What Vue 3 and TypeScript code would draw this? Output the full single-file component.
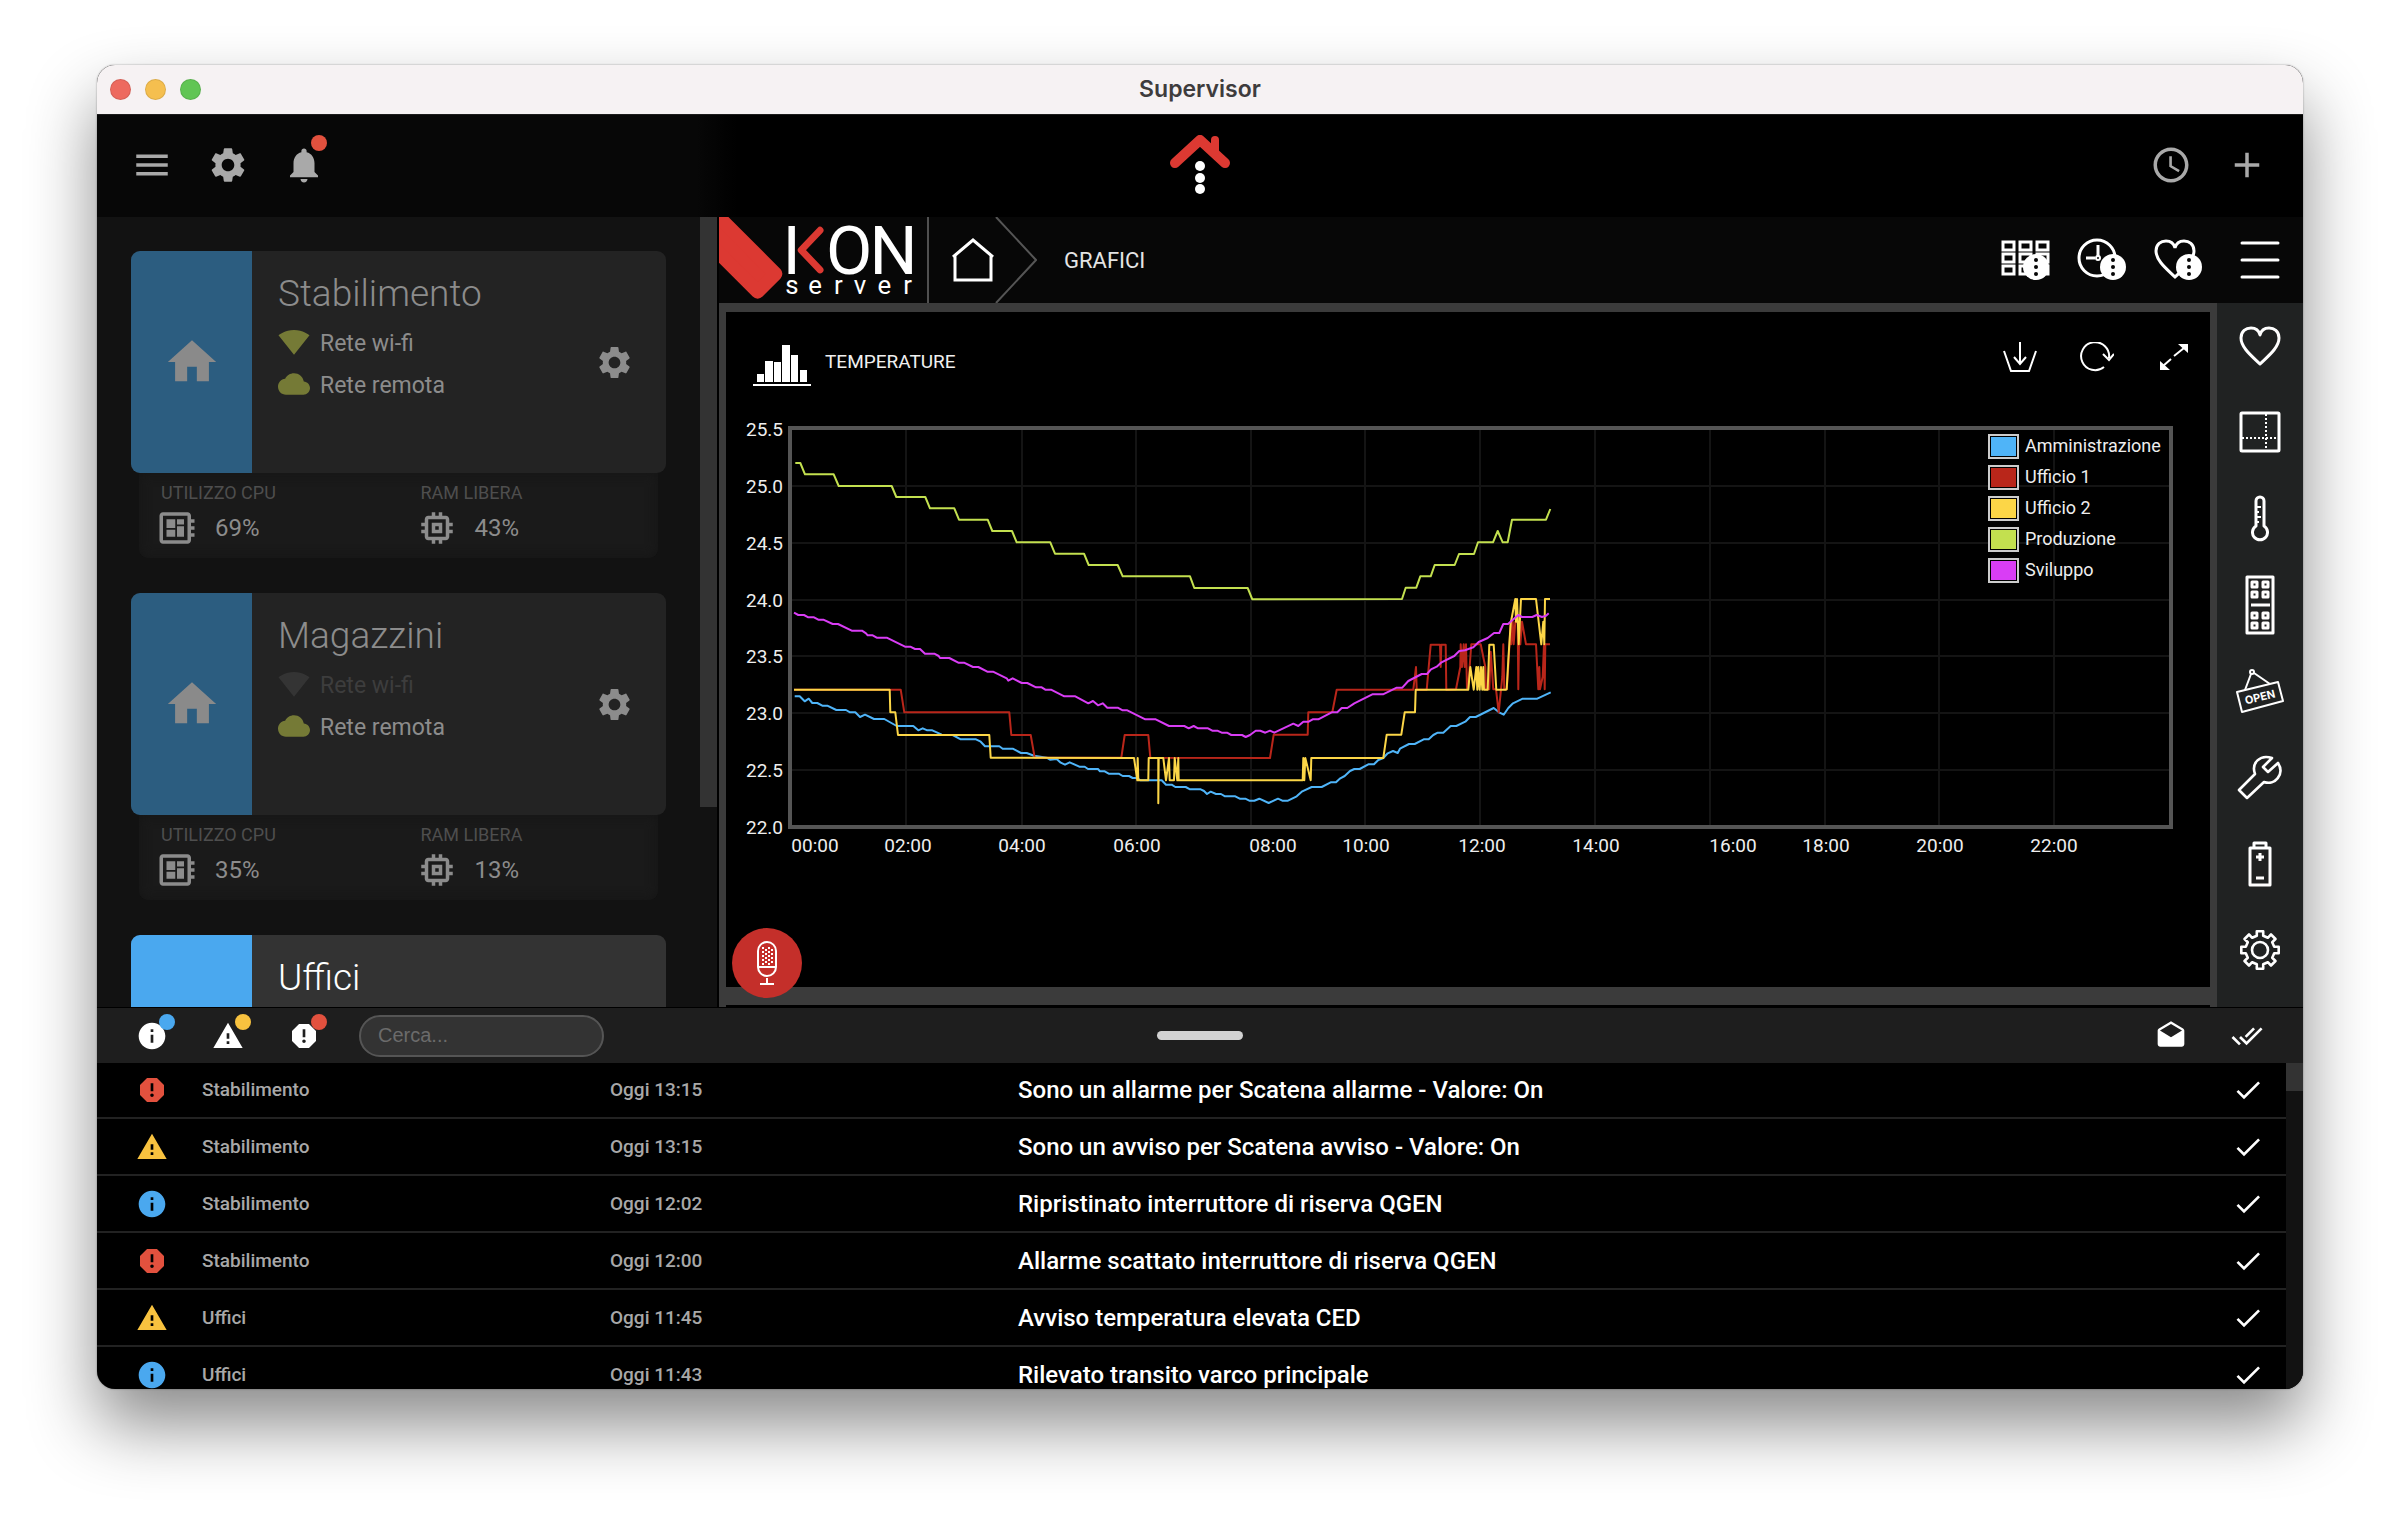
<script setup lang="ts">
import { computed, ref } from 'vue'

type Level = 'alarm' | 'warning' | 'info'
type Point = [number, number]

const icons = {
  menu: 'M3 18h18v-2H3v2zm0-5h18v-2H3v2zm0-7v2h18V6H3z',
  settings:
    'M19.14 12.94c.04-.3.06-.61.06-.94 0-.32-.02-.64-.07-.94l2.03-1.58c.18-.14.23-.41.12-.61l-1.92-3.32c-.12-.22-.37-.29-.59-.22l-2.39.96c-.5-.38-1.03-.7-1.62-.94l-.36-2.54c-.04-.24-.24-.41-.48-.41h-3.84c-.24 0-.43.17-.47.41l-.36 2.54c-.59.24-1.13.57-1.62.94l-2.39-.96c-.22-.08-.47 0-.59.22L2.74 8.87c-.12.21-.08.47.12.61l2.03 1.58c-.05.3-.09.63-.09.94s.02.64.07.94l-2.03 1.58c-.18.14-.23.41-.12.61l1.92 3.32c.12.22.37.29.59.22l2.39-.96c.5.38 1.03.7 1.62.94l.36 2.54c.05.24.24.41.48.41h3.84c.24 0 .44-.17.47-.41l.36-2.54c.59-.24 1.13-.56 1.62-.94l2.39.96c.22.08.47 0 .59-.22l1.92-3.32c.12-.22.07-.47-.12-.61l-2.01-1.58zM12 15.6c-1.98 0-3.6-1.62-3.6-3.6s1.62-3.6 3.6-3.6 3.6 1.62 3.6 3.6-1.62 3.6-3.6 3.6z',
  bell: 'M12 22c1.1 0 2-.9 2-2h-4c0 1.1.89 2 2 2zm6-6v-5c0-3.07-1.64-5.64-4.5-6.32V4c0-.83-.67-1.5-1.5-1.5s-1.5.67-1.5 1.5v.68C7.63 5.36 6 7.92 6 11v5l-2 2v1h16v-1l-2-2z',
  clock:
    'M11.99 2C6.47 2 2 6.48 2 12s4.47 10 9.99 10C17.52 22 22 17.52 22 12S17.52 2 11.99 2zM12 20c-4.42 0-8-3.58-8-8s3.58-8 8-8 8 3.58 8 8-3.58 8-8 8zm.5-13H11v6l5.25 3.15.75-1.23-4.5-2.67z',
  add: 'M19 13h-6v6h-2v-6H5v-2h6V5h2v6h6v2z',
  home: 'M10 20v-6h4v6h5v-8h3L12 3 2 12h3v8z',
  wifi: 'M12.01 21.49L23.64 7c-.45-.34-4.93-4-11.64-4C5.28 3 .81 6.66.36 7l11.63 14.49.01.01.01-.01z',
  cloud:
    'M19.35 10.04C18.67 6.59 15.64 4 12 4 9.11 4 6.6 5.64 5.35 8.04 2.34 8.36 0 10.91 0 14c0 3.31 2.69 6 6 6h13c2.76 0 5-2.24 5-5 0-2.64-2.05-4.78-4.65-4.96z',
  board:
    'M22 9V7h-2V5c0-1.1-.9-2-2-2H4c-1.1 0-2 .9-2 2v14c0 1.1.9 2 2 2h14c1.1 0 2-.9 2-2v-2h2v-2h-2v-2h2v-2h-2V9h2zm-4 10H4V5h14v14zM6 13h5v4H6zm6-6h4v3h-4zM6 7h5v5H6zm6 4h4v6h-4z',
  memory:
    'M15 9H9v6h6V9zm-2 4h-2v-2h2v2zm8-2V9h-2V7c0-1.1-.9-2-2-2h-2V3h-2v2h-2V3H9v2H7c-1.1 0-2 .9-2 2v2H3v2h2v2H3v2h2v2c0 1.1.9 2 2 2h2v2h2v-2h2v2h2v-2h2c1.1 0 2-.9 2-2v-2h2v-2h-2v-2h2zm-4 6H7V7h10v10z',
  drafts:
    'M21.99 8c0-.72-.37-1.35-.94-1.7L12 1 2.95 6.3C2.38 6.65 2 7.28 2 8v10c0 1.1.9 2 2 2h16c1.1 0 2-.9 2-2l-.01-10zM12 13L3.74 7.84 12 3l8.26 4.84L12 13z',
  doneAll:
    'M18 7l-1.41-1.41-6.34 6.34 1.41 1.41L18 7zm4.24-1.41L11.66 16.17 7.48 12l-1.41 1.41L11.66 19l12-12-1.42-1.41zM.41 13.41L6 19l1.41-1.41L1.83 12 .41 13.41z',
  done: 'M9 16.2L4.8 12l-1.4 1.4L9 19 21 7l-1.4-1.4L9 16.2z',
}

const levelIcons: Record<Level, string> = {
  info: 'M12 2C6.48 2 2 6.48 2 12s4.48 10 10 10 10-4.48 10-10S17.52 2 12 2zm1 15h-2v-6h2v6zm0-8h-2V7h2v2z',
  warning: 'M1 21h22L12 2 1 21zm12-3h-2v-2h2v2zm0-4h-2v-4h2v4z',
  alarm:
    'M15.73 3H8.27L3 8.27v7.46L8.27 21h7.46L21 15.73V8.27L15.73 3zM12 17.3c-.72 0-1.3-.58-1.3-1.3 0-.72.58-1.3 1.3-1.3.72 0 1.3.58 1.3 1.3 0 .72-.58 1.3-1.3 1.3zm1-4.3h-2V7h2v6z',
}

const filters: { level: Level; label: string }[] = [
  { level: 'info', label: 'Informazioni' },
  { level: 'warning', label: 'Avvisi' },
  { level: 'alarm', label: 'Allarmi' },
]

interface Plant {
  name: string
  active?: boolean
  status?: { wifi: boolean; remote: boolean; cpu: string; ram: string }
}

const plants: Plant[] = [
  { name: 'Stabilimento', status: { wifi: true, remote: true, cpu: '69%', ram: '43%' } },
  { name: 'Magazzini', status: { wifi: false, remote: true, cpu: '35%', ram: '13%' } },
  { name: 'Uffici', active: true },
]

const query = ref('')
const events: { level: Level; plant: string; time: string; message: string }[] = [
  { level: 'alarm', plant: 'Stabilimento', time: 'Oggi 13:15', message: 'Sono un allarme per Scatena allarme - Valore: On' },
  { level: 'warning', plant: 'Stabilimento', time: 'Oggi 13:15', message: 'Sono un avviso per Scatena avviso - Valore: On' },
  { level: 'info', plant: 'Stabilimento', time: 'Oggi 12:02', message: 'Ripristinato interruttore di riserva QGEN' },
  { level: 'alarm', plant: 'Stabilimento', time: 'Oggi 12:00', message: 'Allarme scattato interruttore di riserva QGEN' },
  { level: 'warning', plant: 'Uffici', time: 'Oggi 11:45', message: 'Avviso temperatura elevata CED' },
  { level: 'info', plant: 'Uffici', time: 'Oggi 11:43', message: 'Rilevato transito varco principale' },
]
const shownEvents = computed(() =>
  events.filter((e) => `${e.plant} ${e.message}`.toLowerCase().includes(query.value.toLowerCase())),
)

/* Outline of a cog with eight teeth, centred on (cx, cy). */
function cogPath(cx: number, cy: number, outer: number, inner: number): string {
  const pts: string[] = []
  for (let i = 0; i < 8; i++) {
    const a = (i * Math.PI) / 4
    for (const [r, d] of [[inner, -0.22], [outer, -0.17], [outer, 0.17], [inner, 0.22]]) {
      pts.push(`${(cx + r * Math.sin(a + d)).toFixed(1)} ${(cy - r * Math.cos(a + d)).toFixed(1)}`)
    }
  }
  return `M${pts.join('L')}Z`
}

const heart = '<path d="M21 38C14 31 2 22 2 12C2 5 7 2 12 2C17 2 20 5 21 9C22 5 25 2 30 2C35 2 40 5 40 12C40 22 28 31 21 38Z"/>'
const keys = [[7, 7], [18, 7], [7, 17], [18, 17], [7, 38], [18, 38], [7, 48], [18, 48]]
  .map(([x, y]) => `<rect x="${x}" y="${y}" width="5" height="5"/>`)
  .join('')

const sections = [
  { label: 'Preferiti', w: 42, h: 40, body: heart },
  {
    label: 'Planimetria', w: 42, h: 42,
    body: '<rect x="2" y="2" width="38" height="38" rx="1"/><path stroke-width="2" stroke-dasharray="2 2" d="M27 3V39M3 27H39"/>',
  },
  {
    label: 'Clima', w: 18, h: 48,
    body: '<path d="M5 31V6a4 4 0 0 1 8 0v25a7.5 7.5 0 1 1-8 0z"/><path stroke-width="2" d="M5 12h5M5 17h3M5 22h5M5 27h3"/>',
  },
  { label: 'Pulsanti', w: 30, h: 60, body: `<rect x="2" y="2" width="26" height="56"/>${keys}<path d="M6 30H25"/>` },
  {
    label: 'Apertura', w: 48, h: 46,
    body: '<g stroke-width="2"><path d="M1 24L42 14L47 33L6 44Z"/><circle cx="16" cy="4" r="2"/><path d="M9 22L15 6M18 5L34 16"/></g><text x="24" y="33" transform="rotate(-14 24 29)" text-anchor="middle" font-family="Inter, sans-serif" font-size="11" font-weight="700" fill="#fff" stroke="none">OPEN</text>',
  },
  {
    label: 'Manutenzione', w: 46, h: 46,
    body: '<path stroke-width="2.6" d="M2 36L18 20C14 9 23 0 35 4L26 13L31 18L41 9C48 20 38 32 27 28L10 44Z"/>',
  },
  {
    label: 'Energia', w: 24, h: 46,
    body: '<path d="M2 7H22V44H2ZM6 7V2H18V7M12 12V20M8 16H16M8 37H16"/>',
  },
  { label: 'Impostazioni', w: 42, h: 42, body: `<path stroke-width="2.6" d="${cogPath(21, 21, 19, 14.5)}"/><circle stroke-width="2.6" cx="21" cy="21" r="8"/>` },
]

/* Chart geometry: one degree is 341 trace units, three trace units are one chart unit. */
const yTicks = [25.5, 25, 24.5, 24, 23.5, 23, 22.5, 22].map((v, i) => ({
  label: v.toFixed(1),
  y: 29 + i * 57 - (i > 3 ? 1 : 0),
}))
const xTicks = [
  { label: '00:00', x: 89, grid: 0 },
  { label: '02:00', x: 182, grid: 180 },
  { label: '04:00', x: 296, grid: 296 },
  { label: '06:00', x: 411, grid: 410 },
  { label: '08:00', x: 547, grid: 525 },
  { label: '10:00', x: 640, grid: 639 },
  { label: '12:00', x: 756, grid: 754 },
  { label: '14:00', x: 870, grid: 869 },
  { label: '16:00', x: 1007, grid: 984 },
  { label: '18:00', x: 1100, grid: 1099 },
  { label: '20:00', x: 1214, grid: 1213 },
  { label: '22:00', x: 1328, grid: 1328 },
]

function block(dx: number, dy: number, flat: number[]): Point[] {
  const out: Point[] = []
  for (let i = 0; i < flat.length; i += 2) out.push([flat[i] + dx, flat[i + 1] + dy])
  return out
}
const night = (...flat: number[]) => block(0, 0, flat)
const morning = (...flat: number[]) => block(1170, 480, flat)
const noon = (...flat: number[]) => block(1830, 240, flat)

const series: { name: string; color: string; points: Point[] }[] = [
  {
    name: 'Amministrazione', color: '#4fb4f8',
    points: [
      ...night(194, 889, 209, 889, 224, 904, 236, 896, 247, 909, 262, 909, 277, 917, 292, 917, 319, 930, 348, 930, 360, 937, 376, 937, 390, 951, 405, 944, 432, 957, 463, 957, 500, 978, 550, 978, 565, 991, 578, 985, 592, 991, 607, 991, 635, 1004, 668, 1005, 692, 1018, 738, 1018, 752, 1025, 765, 1039, 808, 1039, 818, 1046, 848, 1046, 873, 1059, 890, 1059, 912, 1067, 950, 1073, 960, 1079, 980, 1077, 992, 1088, 1005, 1094, 1019, 1087, 1048, 1100, 1064, 1100, 1074, 1107, 1104, 1107, 1110, 1114, 1124, 1114, 1136, 1121, 1166, 1121),
      ...morning(8, 648, 27, 648, 38, 654, 50, 654, 62, 661, 125, 661, 138, 674, 155, 674, 166, 681, 197, 681, 210, 688, 242, 688, 252, 693, 261, 702, 272, 695, 288, 702, 303, 702, 315, 709, 346, 709, 359, 716, 376, 716, 388, 722, 403, 722, 418, 716, 446, 729, 474, 716, 487, 722, 504, 722, 530, 709, 547, 694, 575, 681, 605, 681, 632, 667, 648, 667, 661, 655, 674, 648, 690, 633, 703, 627, 719, 627, 745, 613, 762, 613, 775, 600, 790, 594, 803, 580, 819, 573, 833, 579, 840, 566, 867, 552, 884, 552, 911, 538, 926, 538, 940, 525, 953, 518, 970, 518, 992, 498, 1009, 498, 1036, 485, 1050, 471, 1067, 471, 1121, 444, 1137, 457, 1151, 464, 1165, 444, 1179, 430, 1208, 416, 1252, 416, 1292, 397),
    ],
  },
  {
    name: 'Ufficio 1', color: '#b9261a',
    points: [
      ...night(192, 869, 512, 869, 523, 937, 838, 937, 844, 1005, 902, 1005, 914, 1073, 1174, 1073, 1184, 1005, 1255, 1005, 1261, 1073),
      ...morning(450, 594, 461, 524, 563, 524, 565, 457, 637, 457, 650, 389, 880, 389, 888, 321, 890, 389, 920, 389, 932, 254, 960, 254, 962, 321, 964, 254, 977, 254, 979, 389),
      ...noon(348, 628, 361, 561, 362, 493, 366, 561, 371, 493, 374, 561, 378, 493, 381, 628, 384, 628, 394, 493, 422, 493, 436, 561, 438, 628, 448, 628, 452, 515, 460, 628, 468, 628, 476, 697, 487, 590, 490, 493, 493, 628, 500, 628, 505, 560, 512, 425, 514, 493, 518, 425, 521, 493, 526, 425, 533, 425, 535, 628, 538, 425, 541, 493, 546, 425, 558, 493, 588, 493, 595, 628, 598, 561, 600, 628, 608, 590, 612, 493, 614, 628, 616, 493, 630, 493),
    ],
  },
  {
    name: 'Ufficio 2', color: '#fcd647',
    points: [
      ...night(192, 869, 479, 869, 481, 937, 496, 937, 504, 1005, 778, 1005, 782, 1073),
      ...morning(42, 594, 52, 661, 53, 594, 55, 661, 85, 661, 86, 594, 115, 594, 115, 730, 116, 594, 130, 594, 138, 661, 147, 594, 149, 661, 162, 661, 164, 594, 172, 661, 175, 594, 176, 661, 548, 661, 550, 594, 553, 661, 556, 594, 572, 661, 574, 594, 790, 594, 800, 524, 844, 524, 854, 457, 885, 457, 887, 389, 1045, 389, 1051, 321, 1061, 389, 1069, 321, 1072, 389, 1075, 321, 1079, 389, 1083, 321, 1087, 389, 1090, 321, 1092, 389, 1103, 389, 1108, 254, 1121, 254, 1129, 389, 1158, 389),
      ...noon(500, 628, 505, 540, 512, 430, 526, 357, 528, 425, 531, 357, 536, 493, 543, 357, 588, 357, 604, 493, 610, 425, 613, 493, 615, 357, 630, 357),
    ],
  },
  {
    name: 'Produzione', color: '#c3e04f',
    points: [
      ...night(196, 189, 211, 189, 225, 223, 311, 223, 326, 258, 485, 258, 499, 291, 586, 291, 600, 325, 673, 325, 687, 359, 773, 359, 787, 393, 846, 393, 860, 427, 961, 427, 975, 461, 1062, 461, 1076, 495, 1163, 495, 1178, 529),
      ...morning(210, 49, 223, 84, 383, 84, 397, 118),
      ...noon(186, 357, 197, 323, 229, 323, 241, 289, 272, 289, 284, 255, 344, 255, 357, 222, 402, 222, 414, 187, 459, 187, 473, 153, 488, 187, 503, 187, 516, 119, 618, 119, 631, 87),
    ],
  },
  {
    name: 'Sviluppo', color: '#d93df5',
    points: [
      ...night(192, 638, 205, 645, 222, 645, 235, 652, 252, 652, 265, 659, 280, 659, 308, 672, 324, 672, 365, 692, 396, 692, 408, 700, 413, 706, 428, 706, 440, 713, 470, 713, 525, 740, 541, 740, 555, 747, 570, 747, 585, 761, 613, 761, 626, 768, 630, 774, 658, 774, 685, 788, 702, 788, 729, 801, 745, 801, 772, 815, 789, 815, 830, 835, 835, 842, 848, 835, 875, 849, 892, 849, 918, 862, 935, 862, 946, 869, 963, 869, 1003, 889, 1036, 889, 1075, 910, 1089, 903, 1104, 916, 1118, 910, 1132, 923, 1163, 923),
      ...morning(8, 451, 22, 451, 76, 478, 107, 478, 147, 498, 193, 498, 206, 505, 221, 498, 234, 505, 264, 505, 277, 512, 292, 512, 305, 518, 321, 518, 334, 525, 366, 525, 377, 531, 390, 525, 407, 512, 421, 512, 436, 518, 450, 512, 463, 518, 520, 491, 535, 498, 550, 485, 566, 485, 578, 478, 595, 478, 635, 457, 652, 457, 665, 444, 682, 444, 703, 430, 757, 403, 789, 403, 830, 383, 847, 383, 865, 363, 905, 342, 921, 342, 933, 328, 950, 320, 963, 308, 1003, 288, 1018, 273, 1035, 271, 1060, 262, 1076, 246, 1103, 234, 1122, 219, 1138, 219),
      ...noon(490, 432, 504, 432, 535, 405, 546, 411, 577, 411, 590, 405, 606, 411, 618, 407, 626, 400),
    ],
  },
]
const polyline = (pts: Point[]) => pts.map(([x, y]) => `${(x / 3 + 4).toFixed(1)},${(y / 3).toFixed(1)}`).join(' ')

const micHoles: Point[] = []
for (let r = 0; r < 9; r++) for (let c = 0; c < 4; c++) if ((r + c) % 2 === 0) micHoles.push([5 + c * 3, 6 + r * 2])
</script>

<template>
  <div class="desktop">
    <div class="window">
      <header class="titlebar">
        <div class="lights">
          <button class="light close" aria-label="Chiudi"></button>
          <button class="light minimize" aria-label="Riduci"></button>
          <button class="light zoom" aria-label="Ingrandisci"></button>
        </div>
        <h1>Supervisor</h1>
      </header>

      <div class="appbar">
        <div class="bar-group">
          <button class="tool" aria-label="Menu"><svg viewBox="0 0 24 24"><path :d="icons.menu" /></svg></button>
          <button class="tool" aria-label="Impostazioni"><svg viewBox="0 0 24 24"><path :d="icons.settings" /></svg></button>
          <button class="tool" aria-label="Notifiche">
            <svg viewBox="0 0 24 24"><path :d="icons.bell" /></svg>
            <span class="dot alarm high"></span>
          </button>
        </div>
        <svg class="brand" viewBox="0 0 62 60">
          <g fill="none" stroke="#dc3932" stroke-width="9" stroke-linecap="round" stroke-linejoin="round">
            <path d="M6 28L31 5L56 28" stroke-width="10" />
            <path d="M46 5V18" stroke-width="8" />
          </g>
          <g fill="#fff">
            <circle cx="31" cy="31" r="5" />
            <circle cx="31" cy="43" r="5" />
            <circle cx="31" cy="54" r="5" />
          </g>
        </svg>
        <div class="bar-group end">
          <button class="tool" aria-label="Cronologia"><svg viewBox="0 0 24 24"><path :d="icons.clock" /></svg></button>
          <button class="tool" aria-label="Aggiungi"><svg viewBox="0 0 24 24"><path :d="icons.add" /></svg></button>
        </div>
      </div>

      <div class="main">
        <aside class="sidebar">
          <div class="plants">
            <section v-for="p in plants" :key="p.name" class="plant" :class="{ active: p.active }">
              <div class="card">
                <div class="badge">
                  <svg v-if="!p.active" viewBox="0 0 24 24"><path :d="icons.home" /></svg>
                </div>
                <div class="details">
                  <h2>{{ p.name }}</h2>
                  <template v-if="p.status">
                    <p :class="{ off: !p.status.wifi }"><svg viewBox="0 0 24 24"><path :d="icons.wifi" /></svg>Rete wi-fi</p>
                    <p :class="{ off: !p.status.remote }"><svg viewBox="0 0 24 24"><path :d="icons.cloud" /></svg>Rete remota</p>
                  </template>
                </div>
                <button class="config" :aria-label="`Configura ${p.name}`">
                  <svg viewBox="0 0 24 24"><path :d="icons.settings" /></svg>
                </button>
              </div>
              <dl v-if="p.status" class="stats">
                <div>
                  <dt>UTILIZZO CPU</dt>
                  <dd><svg viewBox="0 0 24 24"><path :d="icons.board" /></svg>{{ p.status.cpu }}</dd>
                </div>
                <div>
                  <dt>RAM LIBERA</dt>
                  <dd><svg viewBox="0 0 24 24"><path :d="icons.memory" /></svg>{{ p.status.ram }}</dd>
                </div>
              </dl>
            </section>
          </div>
          <div class="scroll"><div class="thumb"></div></div>
        </aside>

        <div class="remote">
          <header class="remote-head">
            <svg class="ikon" viewBox="0 0 210 86" role="img" aria-label="IKON server">
              <path d="M39 75L57 57L-13 -13L-31 5Z" fill="#dc3932" stroke="#dc3932" stroke-width="14" stroke-linejoin="round" />
              <g fill="#fff" font-family="Roboto, sans-serif">
                <text x="64 108 152" y="57" font-size="68">ION</text>
                <text x="67 90 116 136 160 186" y="77" font-size="26">server</text>
              </g>
              <path d="M102 13L83 33L102 53" fill="none" stroke="#dc3932" stroke-width="7" stroke-linecap="round" stroke-linejoin="round" />
            </svg>
            <a class="crumb-home" href="#" aria-label="Home">
              <svg class="house" viewBox="0 0 44 44"><path d="M2 19L22 2L42 19M4 18V42H40V18" /></svg>
              <svg class="arrow" viewBox="0 0 42 86"><path d="M1 0L41 43L1 86" /></svg>
            </a>
            <span class="crumb">GRAFICI</span>
            <div class="head-tools">
              <button aria-label="Moduli">
                <svg viewBox="0 0 50 44">
                  <g stroke-width="3">
                    <template v-for="r in 3" :key="r">
                      <rect v-for="c in 3" :key="c" :x="c * 17 - 15" :y="r * 12 - 8" width="11" height="8" />
                    </template>
                  </g>
                  <circle cx="35" cy="29" r="13" class="fill" />
                  <g class="hole"><circle cx="35" cy="22" r="2" /><circle cx="35" cy="29" r="2" /><circle cx="35" cy="36" r="2" /></g>
                </svg>
              </button>
              <button aria-label="Programmi">
                <svg viewBox="0 0 50 44">
                  <circle cx="20" cy="20" r="18" /><path d="M21 7V18M9 20H18" /><circle cx="21" cy="20" r="2" stroke-width="2" />
                  <circle cx="36" cy="29" r="13" class="fill" />
                  <g class="hole"><circle cx="36" cy="22" r="2" /><circle cx="36" cy="29" r="2" /><circle cx="36" cy="36" r="2" /></g>
                </svg>
              </button>
              <button aria-label="Scenari preferiti">
                <svg viewBox="0 0 50 44">
                  <g transform="translate(1 1)" v-html="heart"></g>
                  <circle cx="36" cy="29" r="13" class="fill" />
                  <g class="hole"><circle cx="36" cy="22" r="2" /><circle cx="36" cy="29" r="2" /><circle cx="36" cy="36" r="2" /></g>
                </svg>
              </button>
              <button class="more" aria-label="Menu">
                <svg viewBox="0 0 50 44"><path d="M7 5H43M7 22H43M7 39H43" stroke-linecap="round" /></svg>
              </button>
            </div>
          </header>

          <div class="remote-body">
            <div class="frame">
              <div class="panel">
                <div class="panel-head">
                  <svg class="bars" viewBox="0 0 58 42">
                    <path d="M4 30h7v8h-7zM12 17h8v21h-8zM21 18h7v20h-7zM29 1h8v37h-8zM38 11h7v27h-7zM47 26h7v12h-7zM0 40h58v2h-58z" />
                  </svg>
                  <h2>TEMPERATURE</h2>
                  <div class="panel-tools">
                    <button aria-label="Scarica">
                      <svg viewBox="0 0 34 30"><path d="M1 9L8 29H26L33 9M17 0V21M11 15L17 22L23 15" /></svg>
                    </button>
                    <button aria-label="Aggiorna">
                      <svg viewBox="0 0 34 30"><path d="M24 25A14 14 0 1 1 29 16M23 12L29 18L34 12" /></svg>
                    </button>
                    <button aria-label="Espandi">
                      <svg viewBox="0 0 34 30">
                        <path d="M27 6L17 14M14 17L6 24" />
                        <path class="fill" d="M21 2H31V11ZM3 19V28H13Z" />
                      </svg>
                    </button>
                  </div>
                </div>
                <svg class="chart" viewBox="0 0 1484 460">
                  <g stroke="#141414" stroke-width="2">
                    <path v-for="t in xTicks.slice(1)" :key="t.label" :d="`M${t.grid} 30V426`" />
                    <path v-for="t in yTicks.slice(1, 7)" :key="t.label" :d="`M66 ${t.y}H1444`" />
                  </g>
                  <rect x="64" y="28" width="1381" height="399" fill="none" stroke="#555" stroke-width="4" />
                  <g fill="none" stroke-width="2" stroke-linejoin="round">
                    <polyline v-for="s in series" :key="s.name" :points="polyline(s.points)" :stroke="s.color" />
                  </g>
                  <g class="ticks">
                    <text v-for="t in yTicks" :key="t.label" x="57" :y="t.y + 7" text-anchor="end">{{ t.label }}</text>
                    <text v-for="t in xTicks" :key="t.label" :x="t.x" y="452" text-anchor="middle">{{ t.label }}</text>
                  </g>
                  <g v-for="(s, i) in series" :key="s.name" class="legend">
                    <rect x="1263" :y="35 + i * 31" width="29" height="23" fill="#000" stroke="#ccc" stroke-width="2" />
                    <rect x="1265" :y="37 + i * 31" width="25" height="19" :fill="s.color" />
                    <text x="1299" :y="52 + i * 31">{{ s.name }}</text>
                  </g>
                </svg>
              </div>
              <button class="mic" aria-label="Comando vocale">
                <svg viewBox="0 0 20 44">
                  <rect x="1" y="1" width="18" height="34" rx="9" />
                  <path d="M1 26H19M10 37V42M3 43H17" />
                  <rect v-for="([x, y], i) in micHoles" :key="i" class="fill" :x="x" :y="y" width="2" height="2" />
                </svg>
              </button>
            </div>
            <nav class="sections">
              <a v-for="s in sections" :key="s.label" href="#" :aria-label="s.label">
                <svg :width="s.w" :height="s.h" :viewBox="`0 0 ${s.w} ${s.h}`" v-html="s.body"></svg>
              </a>
            </nav>
          </div>
        </div>
      </div>

      <div class="log">
        <div class="log-bar">
          <button v-for="f in filters" :key="f.level" class="tool small" :aria-label="f.label">
            <svg viewBox="0 0 24 24"><path :d="levelIcons[f.level]" /></svg>
            <span class="dot" :class="f.level"></span>
          </button>
          <input v-model="query" type="text" placeholder="Cerca..." aria-label="Cerca" />
          <div class="grip"></div>
          <div class="bar-group end">
            <button class="tool small" aria-label="Segna come letti"><svg viewBox="0 0 24 24"><path :d="icons.drafts" /></svg></button>
            <button class="tool small" aria-label="Conferma tutti"><svg viewBox="0 0 24 24"><path :d="icons.doneAll" /></svg></button>
          </div>
        </div>
        <div class="log-body">
          <table>
            <tbody>
              <tr v-for="(e, i) in shownEvents" :key="i">
                <td class="c-icon" :class="e.level"><svg viewBox="0 0 24 24"><path :d="levelIcons[e.level]" /></svg></td>
                <td class="c-text">{{ e.plant }}</td>
                <td class="c-text">{{ e.time }}</td>
                <td class="c-msg">{{ e.message }}</td>
                <td class="c-ack">
                  <button class="tool small" aria-label="Conferma"><svg viewBox="0 0 24 24"><path :d="icons.done" /></svg></button>
                </td>
              </tr>
            </tbody>
          </table>
          <div class="scroll"><div class="thumb"></div></div>
        </div>
      </div>
    </div>
  </div>
</template>

<style>
body {
  margin: 0;
  background: #fff;
}
</style>

<style scoped>
* {
  box-sizing: border-box;
}
.desktop {
  height: 100vh;
  padding: 65px 97px 128px;
  overflow: hidden;
  font-family: Roboto, 'Liberation Sans', sans-serif;
  color: #fff;
}
.window {
  display: flex;
  flex-direction: column;
  height: 100%;
  overflow: hidden;
  border-radius: 18px;
  background: #000;
  box-shadow: 0 0 2px rgba(0, 0, 0, 0.4), 0 36px 68px rgba(0, 0, 0, 0.46);
}
button {
  padding: 0;
  border: 0;
  background: none;
  color: inherit;
  cursor: pointer;
}
h1, h2, p, dl, dd {
  margin: 0;
}
svg {
  display: block;
}

/* Title bar */
.titlebar {
  position: relative;
  display: flex;
  flex: none;
  align-items: center;
  justify-content: center;
  height: 49px;
  background: #f6f2f3;
}
.titlebar h1 {
  padding-bottom: 2px;
  font: 600 23px/30px Inter, sans-serif;
  color: #3e3c3d;
}
.lights {
  position: absolute;
  left: 13px;
  display: flex;
  gap: 14px;
}
.light {
  width: 21px;
  height: 21px;
  border: 1px solid rgba(0, 0, 0, 0.1);
  border-radius: 50%;
}
.close { background: #ed6a5f; }
.minimize { background: #f5bf4f; }
.zoom { background: #61c554; }

/* Application bar */
.appbar {
  display: flex;
  flex: none;
  align-items: center;
  justify-content: space-between;
  height: 103px;
  padding: 0 18px 2px 17px;
  border-top: 1px solid #1c1c1c;
  background: linear-gradient(90deg, #070707 600px, #000 640px);
}
.bar-group {
  display: flex;
  flex: 1;
}
.bar-group.end {
  justify-content: flex-end;
}
.tool {
  position: relative;
  display: flex;
  align-items: center;
  justify-content: center;
  width: 76px;
  height: 56px;
  color: #a9a9a9;
}
.tool svg {
  width: 42px;
  height: 42px;
  fill: currentColor;
}
.tool.small {
  color: #fff;
}
.tool.small svg {
  width: 32px;
  height: 32px;
}
.dot {
  position: absolute;
  top: 6px;
  left: 45px;
  width: 16px;
  height: 16px;
  border-radius: 50%;
}
.dot.high { top: -2px; }
.dot.info { background: #4aa8ef; }
.dot.warning { background: #f8c23f; }
.dot.alarm { background: #e2513e; }
.brand {
  width: 62px;
  height: 60px;
}

/* Plants */
.main {
  display: flex;
  flex: 1;
  min-height: 0;
}
.sidebar {
  display: flex;
  flex: none;
  width: 622px;
  overflow: hidden;
  border-right: 2px solid #000;
  background: #121212;
}
.plants {
  display: flex;
  flex: 1;
  flex-direction: column;
  gap: 35px;
  padding: 34px 34px 0;
}
.scroll {
  flex: none;
  width: 17px;
  background: #121212;
}
.thumb {
  background: #333;
}
.sidebar .thumb {
  height: 590px;
}
.plant {
  color: #8c8c8c;
}
.card {
  display: flex;
  height: 222px;
  overflow: hidden;
  border-radius: 9px;
  background: #232323;
}
.badge {
  display: flex;
  align-items: center;
  justify-content: center;
  width: 121px;
  background: #2c5d80;
}
.badge svg {
  width: 58px;
  height: 58px;
  fill: #8a8a8a;
}
.details {
  flex: 1;
  padding: 19px 0 0 26px;
}
.details h2 {
  margin-bottom: 5px;
  font-size: 37px;
  font-weight: 300;
  line-height: 48px;
}
.details p {
  display: flex;
  gap: 10px;
  align-items: center;
  font-size: 23px;
  line-height: 42px;
}
.details svg {
  width: 32px;
  height: 32px;
  margin-bottom: 5px;
  fill: #757a36;
}
.details .off {
  color: #3d3d3d;
}
.details .off svg {
  fill: #343434;
}
.config {
  width: 104px;
}
.config svg {
  width: 39px;
  height: 39px;
  margin: 0 auto;
  fill: currentColor;
}
.active {
  color: #fff;
}
.active .card {
  background: #333;
}
.active .badge {
  background: #4aa8ef;
}
.stats {
  display: flex;
  height: 85px;
  margin: 0 8px;
  padding-top: 9px;
  border-radius: 0 0 9px 9px;
  background: #1a1a1a;
  box-shadow: inset 0 0 12px #151515;
}
.stats > div {
  flex: 1;
  padding-left: 22px;
}
.stats dt {
  font-size: 18px;
  line-height: 21px;
  color: #4e4e4e;
}
.stats dd {
  display: flex;
  gap: 17px;
  align-items: center;
  height: 49px;
  margin-left: -5px;
  font-size: 24px;
}
.stats svg {
  width: 42px;
  height: 42px;
  fill: #8c8c8c;
}

/* Embedded supervisor */
.remote {
  display: flex;
  flex: 1;
  flex-direction: column;
  min-width: 0;
}
.remote-head {
  display: flex;
  flex: none;
  align-items: center;
  height: 86px;
  background: #070707;
}
.ikon {
  width: 210px;
  height: 86px;
  border-right: 2px solid #505050;
  overflow: hidden;
}
.crumb-home {
  display: flex;
  align-items: center;
  padding-left: 22px;
}
.house {
  width: 44px;
  height: 44px;
  fill: none;
  stroke: #fff;
  stroke-width: 3;
}
.arrow {
  width: 42px;
  height: 86px;
  fill: none;
  stroke: #555;
  stroke-width: 2;
}
.crumb {
  margin-left: 27px;
  font-size: 22px;
  color: #e4e4e4;
}
.head-tools {
  display: flex;
  gap: 26px;
  margin-left: auto;
  padding-right: 18px;
}
.more {
  margin-left: 6px;
}
.head-tools svg {
  width: 50px;
  height: 44px;
  fill: none;
  stroke: #fff;
  stroke-width: 3;
}
.head-tools .fill {
  fill: #fff;
  stroke: none;
}
.head-tools .hole {
  fill: #070707;
  stroke: none;
}
.remote-body {
  display: flex;
  flex: 1;
  min-height: 0;
}
.frame {
  position: relative;
  flex: 1;
  min-width: 0;
  padding: 9px 7px 20px;
  background: #3b3b3b;
}
.frame::after {
  position: absolute;
  right: 7px;
  bottom: 0;
  left: 7px;
  height: 2px;
  background: #000;
  content: '';
}
.panel {
  height: 100%;
  overflow: hidden;
  background: #000;
}
.panel-head {
  display: flex;
  align-items: center;
  height: 88px;
  padding: 14px 19px 0 27px;
}
.bars {
  width: 58px;
  height: 42px;
  margin-top: 4px;
  fill: #fff;
}
.panel-head h2 {
  margin: -4px 0 0 14px;
  font-size: 19px;
  font-weight: 400;
  color: #f0f0f0;
}
.panel-tools {
  display: flex;
  gap: 43px;
  margin: -12px 0 0 auto;
}
.panel-tools svg {
  width: 34px;
  height: 30px;
  fill: none;
  stroke: #fff;
  stroke-width: 2;
}
.panel-tools .fill {
  fill: #fff;
  stroke: none;
}
.chart {
  width: 100%;
}
.ticks {
  font-size: 19px;
  fill: #eee;
}
.legend {
  font-size: 18px;
  fill: #eee;
}
.mic {
  position: absolute;
  bottom: 9px;
  left: 13px;
  display: flex;
  align-items: center;
  justify-content: center;
  width: 70px;
  height: 70px;
  border-radius: 50%;
  background: #c42f2a;
}
.mic svg {
  width: 20px;
  height: 44px;
  fill: none;
  stroke: #fff;
  stroke-width: 2;
}
.mic .fill {
  fill: #fff;
  stroke: none;
}
.sections {
  display: flex;
  flex: none;
  flex-direction: column;
  width: 86px;
  padding-bottom: 14px;
  background: #202222;
}
.sections a {
  display: flex;
  flex: 1;
  align-items: center;
  justify-content: center;
}
.sections svg {
  fill: none;
  stroke: #fff;
  stroke-width: 3;
  stroke-linejoin: round;
}

/* Event log */
.log {
  display: flex;
  flex: none;
  flex-direction: column;
  height: 382px;
}
.log-bar {
  position: relative;
  display: flex;
  flex: none;
  align-items: center;
  height: 56px;
  padding: 0 18px 0 17px;
  border-top: 1px solid #000;
  background: #1e1e1e;
}
.log-bar input {
  width: 245px;
  height: 42px;
  margin-left: 17px;
  padding: 0 17px;
  border: 2px solid #555;
  border-radius: 21px;
  outline: 0;
  background: #333;
  color: #fff;
  font: 20px 'Liberation Sans', sans-serif;
}
.log-bar input::placeholder {
  color: #6b6b6b;
}
.grip {
  position: absolute;
  left: calc(50% - 43px);
  width: 86px;
  height: 9px;
  border-radius: 5px;
  background: #d2d2d2;
}
.log-body {
  display: flex;
  flex: 1;
  overflow: hidden;
}
.log-body .thumb {
  height: 28px;
}
table {
  flex: 1;
  align-self: flex-start;
  margin-top: -1px;
  border-collapse: separate;
  border-spacing: 0;
  table-layout: fixed;
}
td {
  height: 57px;
  padding: 0;
  border-bottom: 2px solid #222;
}
.c-icon {
  width: 105px;
  padding-left: 39px;
}
.c-icon svg {
  width: 32px;
  height: 32px;
  fill: currentColor;
}
.c-icon.alarm { color: #e2513e; }
.c-icon.warning { color: #f8c23f; }
.c-icon.info { color: #4aa8ef; }
.c-text {
  width: 408px;
  font-size: 19px;
  font-weight: 500;
  color: #a8a8a8;
}
.c-msg {
  font-size: 24px;
  font-weight: 500;
}
.c-ack {
  width: 76px;
}
.c-ack .tool {
  height: 55px;
}
</style>
